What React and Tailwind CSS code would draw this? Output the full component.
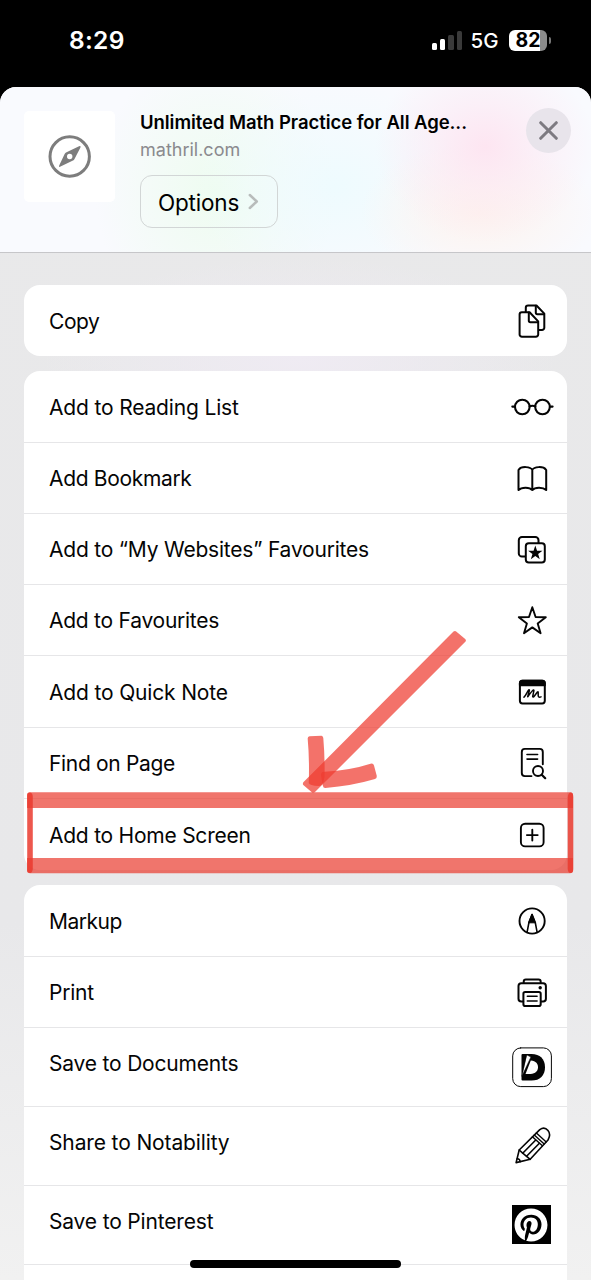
import React from "react";
import { FaPinterest } from "react-icons/fa";

function Icon({ children, sw = 2 }) {
  return (
    <svg
      className="h-11 w-11 shrink-0"
      viewBox="0 0 44 44"
      fill="none"
      stroke="#050505"
      strokeWidth={sw}
      strokeLinecap="round"
      strokeLinejoin="round"
    >
      {children}
    </svg>
  );
}

const CopyIcon = () => (
  <Icon>
    <path d="M15.800 13V8.800a2.300 2.300 0 0 1 2.300-2.300H26.500L34.300 14.600V28.700a2.300 2.300 0 0 1-2.300 2.300h-3" />
    <path d="M25.800 6.700v6.900a1.600 1.600 0 0 0 1.600 1.600H34" />
    <path d="M11.900 13.200H19.600L28.200 22.400V35.400a2.300 2.300 0 0 1-2.300 2.300h-14a2.300 2.300 0 0 1-2.300-2.300V15.500a2.300 2.300 0 0 1 2.300-2.300z" />
    <path d="M18.800 13.400v8.200a1.600 1.600 0 0 0 1.600 1.600H28" />
  </Icon>
);

const GlassesIcon = () => (
  <Icon sw={2.1}>
    <circle cx="12.300" cy="22" r="7.300" />
    <circle cx="32.500" cy="22" r="7.300" />
    <path d="M19.500 21.200q2.900-1 5.900 0M2.300 21.600h2.600M40 21.600h2.600" />
  </Icon>
);

const BookIcon = () => (
  <Icon sw={2}>
    <path d="M22.300 13.800C20.600 10.800 11.500 9.600 8.500 14V34C11.500 31 19.500 30.800 22.300 34C25.100 30.800 33.100 31 36.200 34V14C33.100 9.600 24 10.800 22.300 13.800zV34" />
  </Icon>
);

const FavFolderIcon = () => (
  <Icon sw={2}>
    <path d="M15 29.600h-3a3.200 3.200 0 0 1-3.200-3.200V13.300a3.200 3.200 0 0 1 3.200-3.200h13.300a3.200 3.200 0 0 1 3.200 3.200v2.600" />
    <rect x="15.800" y="16.200" width="19" height="19.400" rx="3" />
    <path
      d="M25.300 18.500l1.750 5.150 5.400.1-4.300 3.250 1.600 5.250-4.450-3.150-4.450 3.150 1.600-5.250-4.300-3.250 5.400-.1z"
      fill="#050505"
      stroke="none"
    />
  </Icon>
);

const StarIcon = () => (
  <Icon sw={1.9}>
    <path d="M22.300 9.200l3.300 9.800 10.200.2-8.100 6.200 2.900 9.800-8.300-5.800-8.300 5.800 2.900-9.800L8.800 19.200l10.200-.2z" />
  </Icon>
);

const QuickNoteIcon = () => (
  <Icon sw={2}>
    <rect x="9.900" y="10.700" width="24.900" height="22.700" rx="2.600" />
    <path d="M9.900 15.200v-2a2.500 2.500 0 0 1 2.500-2.500h19.900a2.500 2.500 0 0 1 2.500 2.500v2z" fill="#050505" />
    <path
      d="M14 27.200C15.800 25.800 17 21.800 18.800 19.800Q19.600 19.400 19.300 20.800L17.700 26.800C19.200 24.800 21.600 21.200 23.200 20Q24.200 19.600 23.800 21.200L22.700 26.500Q23 27.700 24.200 26.200L27.400 22Q28.300 21.400 28.200 22.600L28.200 25.800Q28.700 27.900 31 26.900"
      strokeWidth="1.500"
    />
  </Icon>
);

const FindIcon = () => (
  <Icon sw={1.9}>
    <path d="M21.500 35.100h-6.700a3 3 0 0 1-3-3V10.900a3 3 0 0 1 3-3h15a3 3 0 0 1 3 3v12.300" />
    <path d="M17 13.500h10.600M17 18.100h10.600" strokeWidth="1.600" />
    <circle cx="28" cy="30" r="5" />
    <path d="M31.700 33.700l3.500 3.500" strokeWidth="2.200" />
  </Icon>
);

const AddIcon = () => (
  <Icon sw={1.9}>
    <rect x="10.900" y="10.700" width="22.700" height="22.700" rx="4.200" />
    <path d="M22.300 16.700v10.800M16.900 22.100h10.800" />
  </Icon>
);

const MarkupIcon = () => (
  <Icon sw={1.9}>
    <circle cx="22.100" cy="22" r="12.600" />
    <path d="M17.100 33.200L19 23.200L22.100 15.500L25.200 23.200L27.100 33.200" strokeWidth="1.600" />
    <path d="M22.100 15.300L25.300 23.800h-6.400z" fill="#050505" strokeWidth="1" />
  </Icon>
);

const PrintIcon = () => (
  <Icon>
    <path d="M13.700 12.600v-.8a2.200 2.200 0 0 1 2.200-2.200h12.600a2.200 2.200 0 0 1 2.200 2.200v.8" />
    <path d="M13.200 31.500h-1.900a2.800 2.800 0 0 1-2.800-2.800V16a2.800 2.800 0 0 1 2.800-2.800h21.800a2.800 2.800 0 0 1 2.800 2.800v12.700a2.800 2.800 0 0 1-2.800 2.800h-1.900" />
    <rect x="13.400" y="21.900" width="17.300" height="14.100" rx="1.800" />
    <path d="M17.300 26.300h9.800M17.300 31.100h9.800" strokeWidth="1.500" />
    <circle cx="30.200" cy="17.700" r="1.700" fill="#050505" stroke="none" />
  </Icon>
);

const DocumentsIcon = () => (
  <Icon sw={1}>
    <rect x="2.700" y="2.900" width="38.700" height="38.700" rx="8" />
    <path d="M12.500 9H21.500C30 9 35 14 35 22.300S30 35.600 21.500 35.600H12.500Q11.500 35.600 11.500 34.600V10Q11.500 9 12.500 9z" fill="#050505" stroke="none" />
    <path d="M20.800 15.500C26 16 28 18.800 28 22.300S25.500 28.900 20.500 28.900H15.500z" fill="#fff" stroke="none" />
    <path d="M16.900 10L20.900 12L12 31z" fill="#fff" stroke="#050505" strokeWidth="0.500" />
  </Icon>
);

const PencilIcon = () => (
  <Icon sw={1.6}>
    <path d="M6.100 38.600L9.200 26L29.800 5.600Q34.500 2.300 38 6.600Q41.200 10.600 38 16L20.200 35.300z" />
    <path d="M9.200 26L12.700 29.200L16.600 32.300L20.200 35.300" />
    <path d="M12.700 29.200L25.500 16.200M16.600 32.300L29.400 19.300M7.200 34.800Q10 35 10.200 37.700" />
    <path d="M22.400 12.700L32.400 21.800M24.300 10.900L34.200 19.900M26.400 8.900L36.200 17.900" strokeWidth="1.400" />
  </Icon>
);

const PinterestIcon = () => (
  <span className="mr-[3px] flex h-[39.500px] w-[39.500px] shrink-0 items-center justify-center bg-black">
    <FaPinterest className="h-[34px] w-[34px] text-white" />
  </span>
);

function Row({ label, icon: I, tall, spacing = "tracking-[-0.200px]" }) {
  return (
    <div
      className={`flex items-center justify-between border-b border-[#e6e6e8] pl-[25px] pr-[12.500px] last:border-b-0 ${
        tall ? "h-[78.900px]" : "h-[71.250px]"
      }`}
    >
      <span className={`whitespace-nowrap text-[21px] leading-[26px] text-[#050505] ${spacing} ${tall ? "pb-[5px]" : "pt-[2px]"}`}>
        {label}
      </span>
      <I />
    </div>
  );
}

function Card({ children }) {
  return <div className="overflow-hidden rounded-[16px] bg-white">{children}</div>;
}

function StatusBar() {
  return (
    <div className="flex h-[87px] items-start justify-between pl-[69px] pr-[40px] pt-[25px] text-white">
      <span className="text-[24.500px] font-semibold leading-[30px] tracking-[0.300px]">8:29</span>
      <div className="flex h-[30px] items-center">
        <div className="flex h-[19px] items-end gap-[3px]">
          <span className="h-[7px] w-[5.300px] rounded-[1.500px] bg-white" />
          <span className="h-[11px] w-[5.300px] rounded-[1.500px] bg-white" />
          <span className="h-[15px] w-[5.300px] rounded-[1.500px] bg-[#3a3a3a]" />
          <span className="h-[19px] w-[5.300px] rounded-[1.500px] bg-[#3a3a3a]" />
        </div>
        <span className="ml-[8.500px] w-[29.500px] whitespace-nowrap pt-[1px] text-[20.500px] font-medium leading-[30px]">5G</span>
        <span className="ml-[9px] flex h-[21px] w-[38px] items-center justify-center rounded-[6px] bg-[linear-gradient(90deg,#fff_82%,#8b8b8b_82%)] text-[19.500px] font-bold leading-[21px] text-black">
          82
        </span>
        <span className="ml-[1.500px] h-[7px] w-[2.500px] rounded-r-full bg-[#777]" />
      </div>
    </div>
  );
}

function Header() {
  return (
    <div className="flex h-[166px] items-start rounded-t-[16px] border-b border-[#c6c6c9] bg-[#f9fafe] bg-[radial-gradient(ellipse_110px_95px_at_485px_60px,#fde5f1_0%,#fde5f180_45%,#fde5f100_100%),radial-gradient(ellipse_120px_70px_at_480px_125px,#fdf3ee_0%,#fdf3ee80_50%,#fdf3ee00_100%),radial-gradient(ellipse_140px_110px_at_335px_100px,#eefbfe_0%,#eefbfe80_50%,#eefbfe00_100%),radial-gradient(ellipse_120px_140px_at_215px_105px,#eefcf0_0%,#eefcf080_50%,#eefcf000_100%)] pl-6 pr-5">
      <div className="mt-6 flex h-[91px] w-[91px] items-center justify-center rounded-[5px] bg-white">
        <svg className="h-[43px] w-[43px]" viewBox="0 0 43 43" fill="none">
          <circle cx="21.700" cy="21.500" r="19.700" stroke="#7d7d7d" strokeWidth="3" />
          <path
            d="M32.500 11.300Q32 10.600 30 11.800L18 17.600Q17 18.200 16.500 19.300L11.200 30.500Q10.500 32.400 12 31.800L25 25.500Q26 25 26.500 24L32.200 13Q32.800 11.900 32.500 11.300z"
            fill="#7d7d7d"
          />
          <circle cx="21.700" cy="21.500" r="2.700" fill="#fff" />
        </svg>
      </div>
      <div className="ml-[25px] mt-[22px] flex flex-1 flex-col items-start">
        <span className="whitespace-nowrap text-[18.500px] font-semibold leading-[26px] tracking-[-0.060px] text-black">
          Unlimited Math Practice for All Age...
        </span>
        <span className="mt-[2px] text-[18px] leading-[25px] text-[#8a8a8e]">mathril.com</span>
        <div className="mt-[13px] flex h-[53px] w-[138px] items-center rounded-[12px] border border-[#d2d6d6] pl-[17px]">
          <span className="w-[82px] whitespace-nowrap pt-[2px] text-[22.500px] leading-[28px] tracking-[-0.200px] text-black">Options</span>
          <svg className="ml-[8px] h-[17px] w-[11px]" viewBox="0 0 11 17" fill="none">
            <path d="M1.800 2L8.800 8.500L1.800 15" stroke="#b8bcbb" strokeWidth="2.500" strokeLinecap="round" strokeLinejoin="round" />
          </svg>
        </div>
      </div>
      <div className="mt-[21px] flex h-[45px] w-[45px] shrink-0 items-center justify-center rounded-full bg-[#e8e4eb]">
        <svg className="h-5 w-5" viewBox="0 0 20 20">
          <path d="M1.700 1.700L17.300 17.300M17.300 1.700L1.700 17.300" stroke="#7d7a81" strokeWidth="3" strokeLinecap="round" />
        </svg>
      </div>
    </div>
  );
}

function HandDrawnMarks() {
  return (
    <svg className="pointer-events-none absolute left-0 top-0 h-[1280px] w-[591px]" viewBox="0 0 591 1280">
      <g fill="#ea3a2e" fillOpacity="0.700">
        <path d="M30 792.300H570Q573 792.300 573 795V808H27V795Q27 792.300 30 792.300z" />
        <path d="M27 858H573V870.500Q573 873.300 570 873.300H30Q27 873.300 27 870.500z" />
        <path d="M27.200 796Q27.200 792.600 30 792.600Q32.800 793 32.800 797V869Q32.300 873 30 873Q27.200 873 27.200 870z" fillOpacity="0.850" />
        <path d="M567.700 798Q568 792.600 571 792.600Q573.300 793 573.300 797V869Q573.300 873 570.500 873Q568 873 567.700 869z" fillOpacity="0.850" />
      </g>
      <g fill="#ee3c30" fillOpacity="0.720">
        <path d="M453.500 631.600Q455 630.300 456.500 631.700L465.200 639Q466.600 640.300 465.300 641.800L315 792Q313.300 793.500 311.800 792.200L303.300 785Q302.300 783.500 303.600 782.100z" />
        <path d="M307.700 739Q307.500 736.500 309.500 736.300L321.500 735.800Q323.100 736 323.300 738Q325 758 324.500 777Q323 786 319 786Q309.500 785.500 308.800 783Q309.500 758 307.700 739z" />
        <path d="M321 775Q321.300 771.500 324.500 771.700Q350 770.500 370.500 763.800Q373.300 763 374 765.500L376.800 776Q377 778.300 375 779Q352 785.800 325.500 788Q323.300 788.300 322.800 785.500z" />
      </g>
    </svg>
  );
}

export default function App() {
  return (
    <div className="relative h-[1280px] w-[591px] overflow-hidden bg-black font-['Inter','Liberation_Sans',sans-serif]">
      <StatusBar />
      <div className="h-[1193px] rounded-t-[16px] bg-[#e8e8ea] bg-[radial-gradient(ellipse_260px_100px_at_300px_270px,#efebf3_0%,#efebf300_100%),linear-gradient(180deg,#e9e9ea_0%,#e8e8ea_70%,#f1f1f1_100%)]">
        <Header />
        <div className="flex flex-col gap-[15.200px] pl-6 pr-[24.500px] pt-8">
          <Card>
            <Row label="Copy" icon={CopyIcon} spacing="tracking-[-0.450px]" />
          </Card>
          <Card>
            <Row label="Add to Reading List" icon={GlassesIcon} spacing="tracking-[-0.160px]" />
            <Row label="Add Bookmark" icon={BookIcon} spacing="tracking-[-0.330px]" />
            <Row label="Add to “My Websites” Favourites" icon={FavFolderIcon} spacing="tracking-[-0.210px]" />
            <Row label="Add to Favourites" icon={StarIcon} spacing="tracking-[-0.250px]" />
            <Row label="Add to Quick Note" icon={QuickNoteIcon} spacing="tracking-[-0.160px]" />
            <Row label="Find on Page" icon={FindIcon} spacing="tracking-[-0.330px]" />
            <Row label="Add to Home Screen" icon={AddIcon} spacing="tracking-[-0.240px]" />
          </Card>
          <Card>
            <Row label="Markup" icon={MarkupIcon} spacing="tracking-[-0.500px]" />
            <Row label="Print" icon={PrintIcon} spacing="tracking-[-0.250px]" />
            <Row label="Save to Documents" icon={DocumentsIcon} tall spacing="tracking-[-0.190px]" />
            <Row label="Share to Notability" icon={PencilIcon} tall spacing="tracking-[-0.130px]" />
            <Row label="Save to Pinterest" icon={PinterestIcon} tall spacing="tracking-[-0.170px]" />
            <div className="h-[79px]" />
          </Card>
        </div>
      </div>
      <HandDrawnMarks />
      <div className="absolute left-[190px] top-[1260px] h-[7.500px] w-[211px] rounded-full bg-black" />
    </div>
  );
}
